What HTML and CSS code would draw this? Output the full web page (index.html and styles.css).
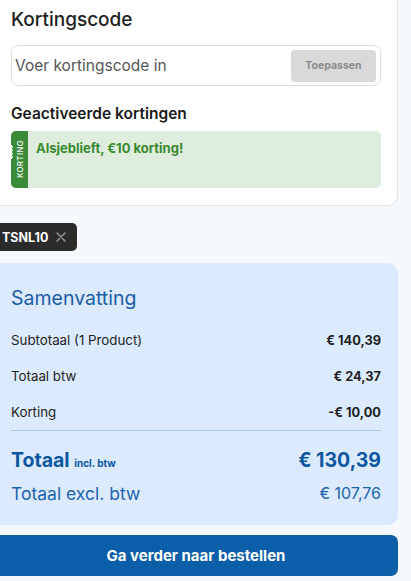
FILE: index.html
```html
<!DOCTYPE html>
<html lang="nl">
<head>
<meta charset="utf-8">
<link rel="stylesheet" href="styles.css">
</head>
<body>
<div class="page">
  <section class="card">
    <h2 class="card-title">Kortingscode</h2>
    <div class="code-field">
      <span class="placeholder">Voer kortingscode in</span>
      <button class="apply-btn">Toepassen</button>
    </div>
    <h3 class="sub-title">Geactiveerde kortingen</h3>
    <div class="discount">
      <div class="strip"><span class="strip-text">KORTING</span></div>
      <div class="discount-text">Alsjeblieft, €10 korting!</div>
    </div>
  </section>

  <div class="tag-row">
    <span class="tag">TSNL10
      <svg class="tag-x" width="10" height="10" viewBox="0 0 10 10"><path d="M1 1L9 9M9 1L1 9" stroke="#9a9a9a" stroke-width="1.4" stroke-linecap="round"/></svg>
    </span>
  </div>

  <section class="summary">
    <h2 class="summary-title">Samenvatting</h2>
    <div class="row"><span>Subtotaal (1 Product)</span><span class="val">€ 140,39</span></div>
    <div class="row"><span>Totaal btw</span><span class="val">€ 24,37</span></div>
    <div class="row"><span>Korting</span><span class="val">-€ 10,00</span></div>
    <div class="divider"></div>
    <div class="total"><span>Totaal <small>incl. btw</small></span><span>€ 130,39</span></div>
    <div class="excl"><span>Totaal excl. btw</span><span>€ 107,76</span></div>
  </section>

  <button class="order-btn">Ga verder naar bestellen</button>
</div>
</body>
</html>
```
FILE: styles.css
```css
* { box-sizing: border-box; }
html, body { margin: 0; padding: 0; }
body {
  background: #f5f9fd;
  font-family: Inter, "Noto Sans", sans-serif;
  color: #222;
  width: 411px;
  height: 581px;
  overflow: hidden;
}
.page {
  margin-left: -10px;
  width: 408px;
  display: flex;
  flex-direction: column;
}
.card {
  background: #fff;
  border-right: 1px solid #e4e4e4;
  border-bottom: 1px solid #e4e4e4;
  border-bottom-right-radius: 10px;
  padding: 8px 16px 17px 21px;
}
.card-title {
  margin: 0;
  font-size: 19px;
  line-height: 24px;
  font-weight: 500;
  color: #1e1e1e;
}
.code-field {
  margin-top: 13px;
  height: 41px;
  border: 1px solid #dcdcdc;
  border-radius: 7px;
  display: flex;
  align-items: center;
  justify-content: space-between;
  padding: 0 4px 0 3px;
}
.placeholder {
  font-size: 15.5px;
  color: #555;
}
.apply-btn {
  border: 0;
  background: #d9d9d9;
  color: #8a8a8a;
  font-family: inherit;
  font-weight: 700;
  font-size: 10.5px;
  width: 85px;
  height: 32px;
  border-radius: 4px;
}
.sub-title {
  margin: 18px 0 0;
  font-size: 15.5px;
  line-height: 20px;
  font-weight: 600;
  color: #1a1a1a;
}
.discount {
  margin-top: 7px;
  height: 57px;
  background: #dfeddf;
  border-radius: 5px;
  display: flex;
  overflow: hidden;
}
.strip {
  width: 17px;
  background: #398a37;
  display: flex;
  align-items: center;
  justify-content: center;
  position: relative;
}
.strip::before {
  content: "";
  position: absolute;
  left: -2px;
  top: 14px;
  width: 4px;
  height: 14px;
  background: radial-gradient(circle at 50% 50%, #fff 1.5px, transparent 1.8px) 0 0 / 4px 3.5px repeat-y;
}
.strip-text {
  writing-mode: vertical-rl;
  transform: rotate(180deg);
  font-size: 8px;
  letter-spacing: 0.3px;
  color: #fff;
  font-weight: 500;
}
.discount-text {
  padding: 9px 0 0 8px;
  font-size: 13px;
  font-weight: 700;
  color: #3a8a30;
}
.tag-row {
  margin-top: 17px;
  display: flex;
}
.tag {
  height: 28px;
  background: #2b2b2b;
  color: #fff;
  border-radius: 0 5px 5px 0;
  display: flex;
  align-items: center;
  gap: 8px;
  padding: 0 11px 0 12px;
  font-size: 12.5px;
  font-weight: 700;
}
.summary {
  margin-top: 12px;
  background: #dbeafd;
  border-radius: 0 10px 10px 0;
  padding: 24px 17px 20px 21px;
}
.summary-title {
  margin: 0 0 13px;
  font-size: 19.5px;
  line-height: 22px;
  font-weight: 400;
  color: #1b5ea6;
}
.row {
  height: 36px;
  display: flex;
  align-items: center;
  justify-content: space-between;
  font-size: 13.3px;
  color: #1f1f1f;
}
.val { font-weight: 700; font-size: 12.8px; }
.divider {
  height: 1px;
  background: #a9cdef;
  margin-right: 0;
}
.total {
  margin-top: 16px;
  height: 26px;
  display: flex;
  align-items: center;
  justify-content: space-between;
  font-size: 19.5px;
  font-weight: 700;
  color: #0c57a0;
}
.total small {
  font-size: 10px;
  font-weight: 700;
}
.excl {
  margin-top: 8px;
  height: 24px;
  display: flex;
  align-items: center;
  justify-content: space-between;
  font-size: 17.5px;
  color: #1d63ad;
}
.excl span:last-child { font-size: 16px; }
.order-btn {
  margin-top: 10px;
  width: 408px;
  height: 41px;
  border: 0;
  border-radius: 0 7px 7px 0;
  background: #0b5ea8;
  color: #fff;
  font-family: inherit;
  font-size: 15px;
  font-weight: 700;
  padding-left: 10px;
}
```
